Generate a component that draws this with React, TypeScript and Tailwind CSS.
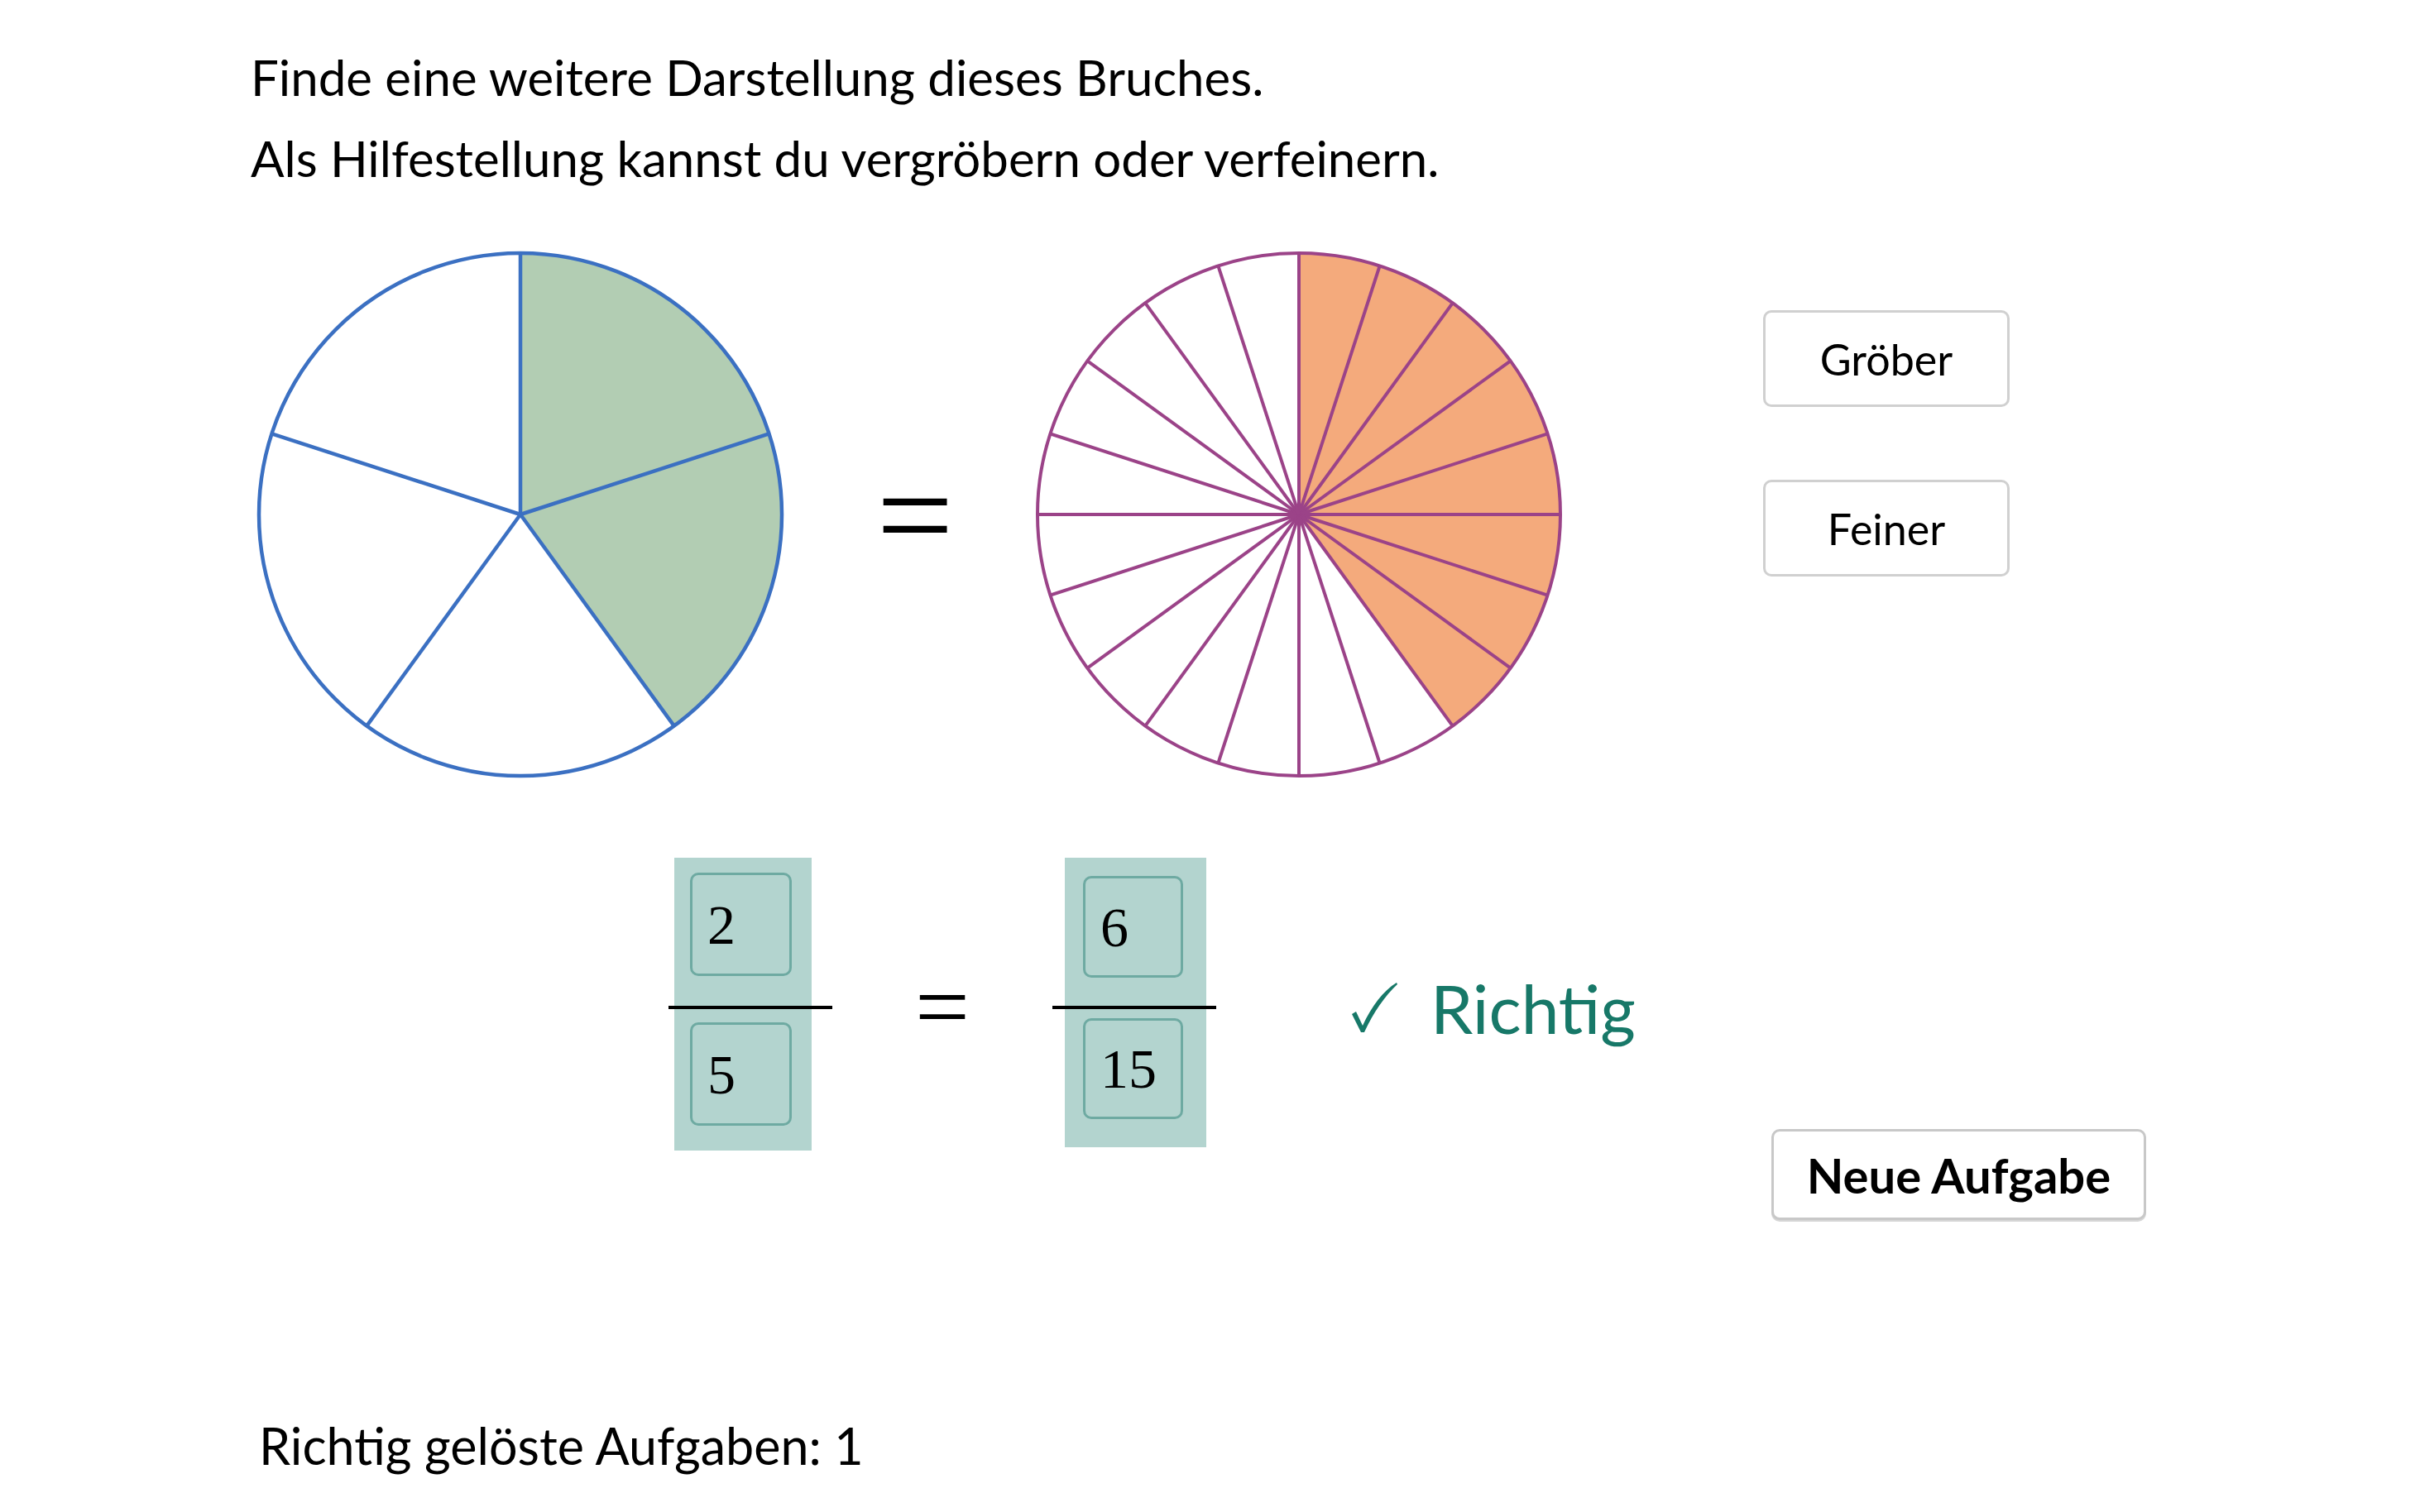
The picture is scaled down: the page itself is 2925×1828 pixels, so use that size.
import React from "react";

const toRad = (d: number) => (d * Math.PI) / 180;

function pt(cx: number, cy: number, r: number, deg: number) {
  return [cx + r * Math.cos(toRad(deg)), cy + r * Math.sin(toRad(deg))];
}

function sector(cx: number, cy: number, r: number, a0: number, a1: number) {
  const [x0, y0] = pt(cx, cy, r, a0);
  const [x1, y1] = pt(cx, cy, r, a1);
  const large = a1 - a0 > 180 ? 1 : 0;
  return `M ${cx} ${cy} L ${x0} ${y0} A ${r} ${r} 0 ${large} 1 ${x1} ${y1} Z`;
}

function Pie({
  parts,
  filled,
  fill,
  stroke,
  strokeWidth,
}: {
  parts: number;
  filled: number;
  fill: string;
  stroke: string;
  strokeWidth: number;
}) {
  const c = 320;
  const r = 316;
  const step = 360 / parts;
  const angles = Array.from({ length: parts }, (_, i) => -90 + i * step);

  return (
    <svg width={640} height={640} viewBox="0 0 640 640" className="shrink-0">
      {angles.map((a, i) => (
        <path
          key={i}
          d={sector(c, c, r, a, a + step)}
          fill={i < filled ? fill : "#ffffff"}
        />
      ))}
      {angles.map((a, i) => {
        const [x, y] = pt(c, c, r, a);
        return (
          <line
            key={"l" + i}
            x1={c}
            y1={c}
            x2={x}
            y2={y}
            stroke={stroke}
            strokeWidth={strokeWidth}
          />
        );
      })}
      <circle cx={c} cy={c} r={r} fill="none" stroke={stroke} strokeWidth={strokeWidth} />
    </svg>
  );
}

function NumBox({ value, w, h }: { value: string; w: string; h: string }) {
  return (
    <div
      className={`${w} ${h} flex items-center rounded-[10px] border-[3px] border-[#6eaaa2] bg-[#b3d4cf] pl-[18px] font-['Liberation_Serif',serif] text-[68px] leading-none text-black`}
    >
      {value}
    </div>
  );
}

function CheckMark() {
  return (
    <svg width={58} height={64} viewBox="0 0 58 64" className="shrink-0">
      <path
        d="M 2 40 L 7 37 L 15 54 C 26 30 40 12 56 2 L 57 4 C 42 18 28 38 17 62 L 13 62 Z"
        fill="#177868"
      />
    </svg>
  );
}

export default function App() {
  return (
    <div className="relative h-[1828px] w-[2925px] overflow-hidden bg-white font-['Lato',sans-serif] text-black">
      {/* Aufgabe */}
      <div className="pl-[303px] pt-[44px]">
        <p className="text-[60px] leading-[98px]">Finde eine weitere Darstellung dieses Bruches.</p>
        <p className="text-[60px] leading-[98px]">Als Hilfestellung kannst du vergröbern oder verfeinern.</p>
      </div>

      {/* Kreise */}
      <div className="mt-[62px] flex items-start pl-[309px]">
        <Pie parts={5} filled={2} fill="#b2cdb3" stroke="#3b70c2" strokeWidth={4.5} />
        <div className="flex h-[640px] w-[301px] items-center justify-center pl-[13px] font-['Liberation_Serif',serif] text-[165px] leading-none">
          =
        </div>
        <Pie parts={20} filled={8} fill="#f4aa7c" stroke="#9b4388" strokeWidth={4} />
        <div className="ml-[241px] mt-[73px] flex flex-col gap-[88px]">
          <button className="h-[117px] w-[298px] rounded-[10px] border-[3px] border-[#d0d0d0] bg-white text-[52px]">
            Gröber
          </button>
          <button className="h-[117px] w-[298px] rounded-[10px] border-[3px] border-[#d0d0d0] bg-white text-[52px]">
            Feiner
          </button>
        </div>
      </div>

      {/* Brüche */}
      <div className="mt-[95px] flex items-start pl-[808px]">
        <div className="relative h-[354px] w-[198px] shrink-0">
          <div className="ml-[7px] flex h-[354px] w-[166px] flex-col gap-[56px] bg-[#b3d4cf] pl-[19px] pt-[18px]">
            <NumBox value="2" w="w-[123px]" h="h-[125px]" />
            <NumBox value="5" w="w-[123px]" h="h-[125px]" />
          </div>
          <div className="absolute left-0 top-[179px] h-[4px] w-[198px] bg-black" />
        </div>

        <div className="flex h-[358px] w-[266px] items-center justify-center font-['Liberation_Serif',serif] text-[117px] leading-none">
          =
        </div>

        <div className="relative h-[354px] w-[198px] shrink-0">
          <div className="ml-[15px] flex h-[350px] w-[171px] flex-col gap-[49px] bg-[#b3d4cf] pl-[22px] pt-[22px]">
            <NumBox value="6" w="w-[121px]" h="h-[123px]" />
            <NumBox value="15" w="w-[121px]" h="h-[122px]" />
          </div>
          <div className="absolute left-0 top-[179px] h-[4px] w-[198px] bg-black" />
        </div>

        <div className="ml-[162px] flex h-[362px] w-[509px] items-center gap-[39px] text-[#177868]">
          <CheckMark />
          <span className="text-[82px] leading-none">Richtig</span>
        </div>

        <button className="mt-[328px] h-[110px] w-[453px] shrink-0 rounded-[10px] border-[3px] border-[#c8c8c8] bg-white text-[58px] font-bold shadow-[0_2px_0_#d6d6d6]">
          Neue Aufgabe
        </button>
      </div>

      {/* Zähler */}
      <p className="mt-[224px] pl-[313px] text-[61px] leading-[98px]">Richtig gelöste Aufgaben: 1</p>
    </div>
  );
}
